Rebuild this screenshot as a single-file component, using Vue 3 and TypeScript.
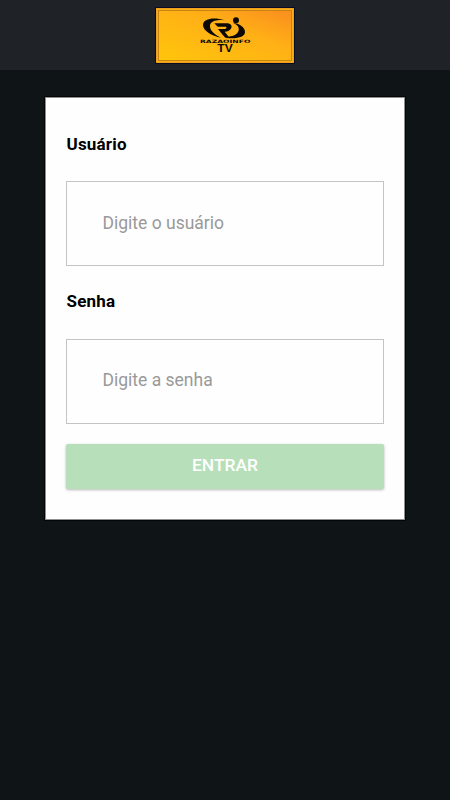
<script setup lang="ts">
import { ref } from 'vue'

interface Field {
  id: string
  label: string
  placeholder: string
  type: string
}

const fields: Field[] = [
  { id: 'user', label: 'Usuário', placeholder: 'Digite o usuário', type: 'text' },
  { id: 'password', label: 'Senha', placeholder: 'Digite a senha', type: 'password' },
]
const values = ref<Record<string, string>>({ user: '', password: '' })
</script>

<template>
  <div class="screen">
    <header class="bar">
      <div class="banner">
        <svg class="logo" viewBox="0 0 210 150" role="img" aria-label="Razaoinfo TV">
          <path d="M104 31 C70 20 39 27 39 45 C39 61 62 77 92 83 C72 72 59 60 60 47 C61 35 78 28 104 31Z" />
          <path d="M73 40 H108 C121 40 127 46 124 54 C121 61 113 65 104 65 L116 80 C131 79 144 72 146 61 C148 51 142 44 128 38 C149 40 165 52 165 66 C165 82 138 88 106 83 L99 76 L84 57 H102 C110 57 113 50 104 50 H83Z" />
          <circle cx="138" cy="31" r="9" />
          <text class="brand" x="30" y="98" textLength="151" lengthAdjust="spacingAndGlyphs">RAZAOINFO</text>
          <text class="tv" x="82" y="125" textLength="46" lengthAdjust="spacingAndGlyphs">TV</text>
        </svg>
      </div>
    </header>
    <form class="card" @submit.prevent>
      <div v-for="field in fields" :key="field.id" class="field">
        <label :for="field.id">{{ field.label }}</label>
        <input :id="field.id" v-model="values[field.id]" :type="field.type" :placeholder="field.placeholder" />
      </div>
      <button type="submit" disabled>ENTRAR</button>
    </form>
  </div>
</template>

<style>
body {
  margin: 0;
  background: #0f1416;
}
</style>

<style scoped>
.screen {
  min-height: 800px;
  background: #0f1416;
  font-family: Roboto, sans-serif;
}
.bar {
  display: flex;
  justify-content: center;
  box-sizing: border-box;
  height: 70px;
  padding-top: 7px;
  background: #1f2327;
}
.banner {
  display: flex;
  justify-content: center;
  box-sizing: border-box;
  width: 138px;
  height: 55px;
  margin-top: 1px;
  padding-top: 2px;
  background: linear-gradient(20deg, #ffc60b 0%, #ffb016 60%, #fa8b20 100%);
  border: 1px solid #efa01b;
  outline: 1px solid #080c24;
  box-shadow: inset 0 0 0 1px #f9ae18, inset 0 0 0 2px #c58413;
}
.logo {
  width: 70px;
  height: 50px;
  margin-top: -1px;
  fill: #0c0804;
}
.brand {
  font: 700 13.5px "DejaVu Sans", sans-serif;
}
.tv {
  font: 700 30px "Liberation Sans", sans-serif;
}
.card {
  box-sizing: border-box;
  width: 360px;
  height: 423px;
  margin: 27px auto 0;
  padding: 36px 20px 0;
  background: #fefefe;
  border: 1px solid #8e9090;
  box-shadow: 0 0 0 1px #030506;
}
.field {
  height: 157.5px;
}
label {
  display: block;
  height: 47px;
  padding-left: 0.5px;
  font-size: 17px;
  font-weight: 700;
  letter-spacing: 0.2px;
  line-height: 20.5px;
  color: #000;
}
.field + .field label {
  line-height: 19px;
}
input {
  box-sizing: border-box;
  display: block;
  width: 318px;
  height: 85px;
  margin: 0;
  padding: 0 35px 2px 35.5px;
  border: 1px solid #c4c4c4;
  border-radius: 0;
  background: #fefefe;
  font: 400 17.5px Roboto, sans-serif;
  color: #222;
  outline: none;
}
input::placeholder {
  color: #999;
  opacity: 1;
}
button {
  display: block;
  width: 318px;
  height: 45px;
  margin: -5px 0 0;
  padding: 0 0 3px;
  border: 0;
  border-radius: 2px;
  background: #b7dfba;
  box-shadow: 0 1px 3px rgba(0, 0, 0, 0.28);
  font: 500 17.4px Roboto, sans-serif;
  color: #fff;
}
</style>
